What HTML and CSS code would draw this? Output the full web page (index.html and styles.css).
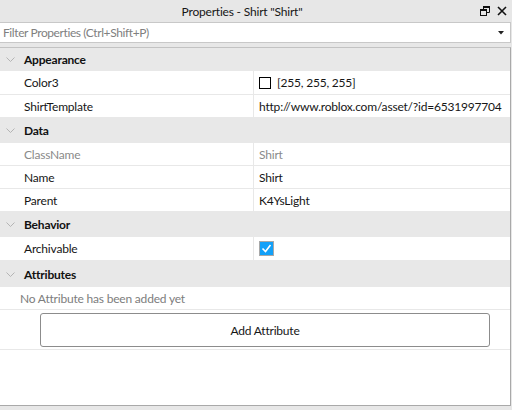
FILE: index.html
```html
<!DOCTYPE html>
<html>
<head>
<meta charset="utf-8">
<link rel="stylesheet" href="styles.css">
</head>
<body>
<div class="panel">
  <div class="titlebar">
    <span class="title">Properties - Shirt "Shirt"</span>
    <span class="winbtns">
      <svg width="10" height="10" viewBox="0 0 10 10" class="restore">
        <path d="M3.5 3V0.5H9.5V6.5H7" fill="none" stroke="#111" stroke-width="1"/>
        <rect x="3" y="0" width="7" height="2" fill="#111"/>
        <rect x="0.5" y="3.5" width="6" height="6" fill="none" stroke="#111" stroke-width="1"/>
        <rect x="0" y="3" width="7" height="2" fill="#111"/>
      </svg>
      <svg width="10" height="10" viewBox="0 0 10 10" class="close">
        <path d="M1 1L9 9M9 1L1 9" stroke="#111" stroke-width="1.6"/>
      </svg>
    </span>
  </div>
  <div class="filter">
    <span class="placeholder">Filter Properties (Ctrl+Shift+P)</span>
    <svg width="6" height="4" viewBox="0 0 6 4" class="dd"><path d="M0 0H6L3 3.5Z" fill="#222"/></svg>
  </div>
  <div class="list">
    <div class="group first">
      <svg width="9" height="5" viewBox="0 0 9 5" class="chev"><path d="M0.5 0.5L4.5 4.5L8.5 0.5" fill="none" stroke="#b4b4b4" stroke-width="1"/></svg>
      <span>Appearance</span>
    </div>
    <div class="row tall">
      <div class="name">Color3</div>
      <div class="val"><span class="swatch"></span>[255, 255, 255]</div>
    </div>
    <div class="row">
      <div class="name">ShirtTemplate</div>
      <div class="val">http://www.roblox.com/asset/?id=6531997704</div>
    </div>
    <div class="group">
      <svg width="9" height="5" viewBox="0 0 9 5" class="chev"><path d="M0.5 0.5L4.5 4.5L8.5 0.5" fill="none" stroke="#b4b4b4" stroke-width="1"/></svg>
      <span>Data</span>
    </div>
    <div class="row">
      <div class="name dim">ClassName</div>
      <div class="val dim">Shirt</div>
    </div>
    <div class="row">
      <div class="name">Name</div>
      <div class="val">Shirt</div>
    </div>
    <div class="row">
      <div class="name">Parent</div>
      <div class="val">K4YsLight</div>
    </div>
    <div class="group">
      <svg width="9" height="5" viewBox="0 0 9 5" class="chev"><path d="M0.5 0.5L4.5 4.5L8.5 0.5" fill="none" stroke="#b4b4b4" stroke-width="1"/></svg>
      <span>Behavior</span>
    </div>
    <div class="row tall">
      <div class="name">Archivable</div>
      <div class="val">
        <span class="check">
          <svg width="13" height="13" viewBox="0 0 13 13"><path d="M2.5 6.5L5.5 9.5L10.5 3" fill="none" stroke="#fff" stroke-width="1.6"/></svg>
        </span>
      </div>
    </div>
    <div class="group attrs">
      <svg width="9" height="5" viewBox="0 0 9 5" class="chev"><path d="M0.5 0.5L4.5 4.5L8.5 0.5" fill="none" stroke="#b4b4b4" stroke-width="1"/></svg>
      <span>Attributes</span>
    </div>
    <div class="empty">No Attribute has been added yet</div>
    <div class="btnrow">
      <div class="btn">Add Attribute</div>
    </div>
  </div>
</div>
</body>
</html>
```
FILE: styles.css
```css
html, body {
  margin: 0;
  padding: 0;
}
body {
  width: 512px;
  height: 410px;
  background: #e7e7e7;
  font-family: Lato, "Noto Sans", sans-serif;
  font-size: 12px;
  letter-spacing: -0.2px;
  color: #161616;
  overflow: hidden;
}
.panel {
  display: flex;
  flex-direction: column;
  height: 410px;
}
.titlebar {
  height: 22px;
  display: flex;
  align-items: center;
  background: #e7e7e7;
}
.title {
  flex: 1;
  text-align: center;
  color: #161616;
  padding-top: 1px;
  padding-left: 4px;
}
.winbtns {
  display: flex;
  justify-content: flex-end;
  align-items: center;
  gap: 7px;
  padding-right: 5px;
}
.filter {
  height: 19px;
  margin-right: 1px;
  border: 1px solid #c8c8c8;
  border-left: none;
  background: #fff;
  display: flex;
  align-items: center;
  justify-content: space-between;
  padding: 0 6px 0 3px;
}
.placeholder {
  color: #808080;
  letter-spacing: -0.4px;
}
.dd {
  margin-top: 1px;
}
.list {
  margin-top: 4px;
  height: 357px;
  margin-right: 1px;
  background: #fff;
  border-top: 1px solid #c2c2c2;
  border-right: 1px solid #a9a9a9;
  border-bottom: 1px solid #a9a9a9;
  display: flex;
  flex-direction: column;
}
.group {
  height: 25px;
  flex: none;
  background: #e8e8e8;
  display: flex;
  align-items: center;
  font-weight: bold;
  color: #111;
}
.group.first {
  height: 23px;
}
.group.attrs {
  height: 26px;
}
.chev {
  margin-left: 6px;
  margin-right: 9px;
}
.row {
  height: 23px;
  flex: none;
  display: grid;
  grid-template-columns: 254px 1fr;
  border-bottom: 1px solid #e8e8e8;
  box-sizing: border-box;
  white-space: nowrap;
}
.row.tall {
  height: 24px;
}
.name {
  padding-left: 24px;
  display: flex;
  align-items: center;
  border-right: 1px solid #e8e8e8;
}
.val {
  padding-left: 5px;
  display: flex;
  align-items: center;
}
.dim {
  color: #8a8a8a;
}
.swatch {
  width: 10px;
  height: 10px;
  border: 1px solid #000;
  background: #fff;
  margin-right: 6px;
}
.check {
  width: 15px;
  height: 15px;
  box-sizing: border-box;
  border: 1px solid #a8a8a8;
  background: #12a0f8;
  display: flex;
  align-items: center;
  justify-content: center;
}
.empty {
  height: 22px;
  flex: none;
  display: flex;
  align-items: center;
  padding-left: 20px;
  color: #7d7d7d;
  border-bottom: 1px solid #e8e8e8;
}
.btnrow {
  height: 40px;
  flex: none;
  padding: 3px 20px 0 40px;
  box-sizing: border-box;
  border-bottom: 1px solid #e8e8e8;
}
.btn {
  height: 34px;
  box-sizing: border-box;
  border: 1px solid #8c8c8c;
  border-radius: 3px;
  display: flex;
  align-items: center;
  justify-content: center;
  color: #161616;
}
```
